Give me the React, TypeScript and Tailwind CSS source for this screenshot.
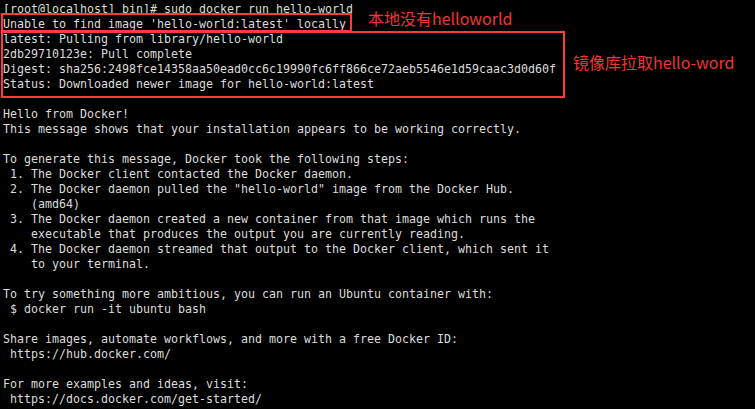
const lines = [
  "[root@localhost] bin]# sudo docker run hello-world",
  "Unable to find image 'hello-world:latest' locally",
  "latest: Pulling from library/hello-world",
  "2db29710123e: Pull complete",
  "Digest: sha256:2498fce14358aa50ead0cc6c19990fc6ff866ce72aeb5546e1d59caac3d0d60f",
  "Status: Downloaded newer image for hello-world:latest",
  "",
  "Hello from Docker!",
  "This message shows that your installation appears to be working correctly.",
  "",
  "To generate this message, Docker took the following steps:",
  " 1. The Docker client contacted the Docker daemon.",
  ' 2. The Docker daemon pulled the "hello-world" image from the Docker Hub.',
  "    (amd64)",
  " 3. The Docker daemon created a new container from that image which runs the",
  "    executable that produces the output you are currently reading.",
  " 4. The Docker daemon streamed that output to the Docker client, which sent it",
  "    to your terminal.",
  "",
  "To try something more ambitious, you can run an Ubuntu container with:",
  " $ docker run -it ubuntu bash",
  "",
  "Share images, automate workflows, and more with a free Docker ID:",
  " https://hub.docker.com/",
  "",
  "For more examples and ideas, visit:",
  " https://docs.docker.com/get-started/",
];

export default function App() {
  return (
    <div className="relative w-[755px] h-[409px] overflow-hidden bg-black">
      {/* Terminal output */}
      <pre className="pt-[2px] pl-[3px] m-0 font-['DejaVu_Sans_Mono',monospace] text-[11.63px] leading-[15px] text-[#dcdcdc] whitespace-pre">
        {lines.map((line, i) => (
          <div key={i} className="h-[15px]">
            {line}
          </div>
        ))}
      </pre>

      {/* Annotation boxes */}
      <div className="absolute left-[1px] top-[13px] w-[351px] h-[19px] border-2 border-[#ff3b3b]" />
      <div className="absolute left-[1px] top-[31px] w-[564px] h-[67px] border-2 border-[#ff3b3b]" />

      {/* Annotation labels */}
      <span className="absolute left-[368px] top-[9px] text-[16px] leading-[18px] text-[#f03535] font-['Noto_Sans_CJK_SC',sans-serif] whitespace-nowrap">
        本地没有helloworld
      </span>
      <span className="absolute left-[573px] top-[53px] text-[16px] leading-[18px] text-[#f03535] font-['Noto_Sans_CJK_SC',sans-serif] whitespace-nowrap">
        镜像库拉取hello-word
      </span>
    </div>
  );
}
